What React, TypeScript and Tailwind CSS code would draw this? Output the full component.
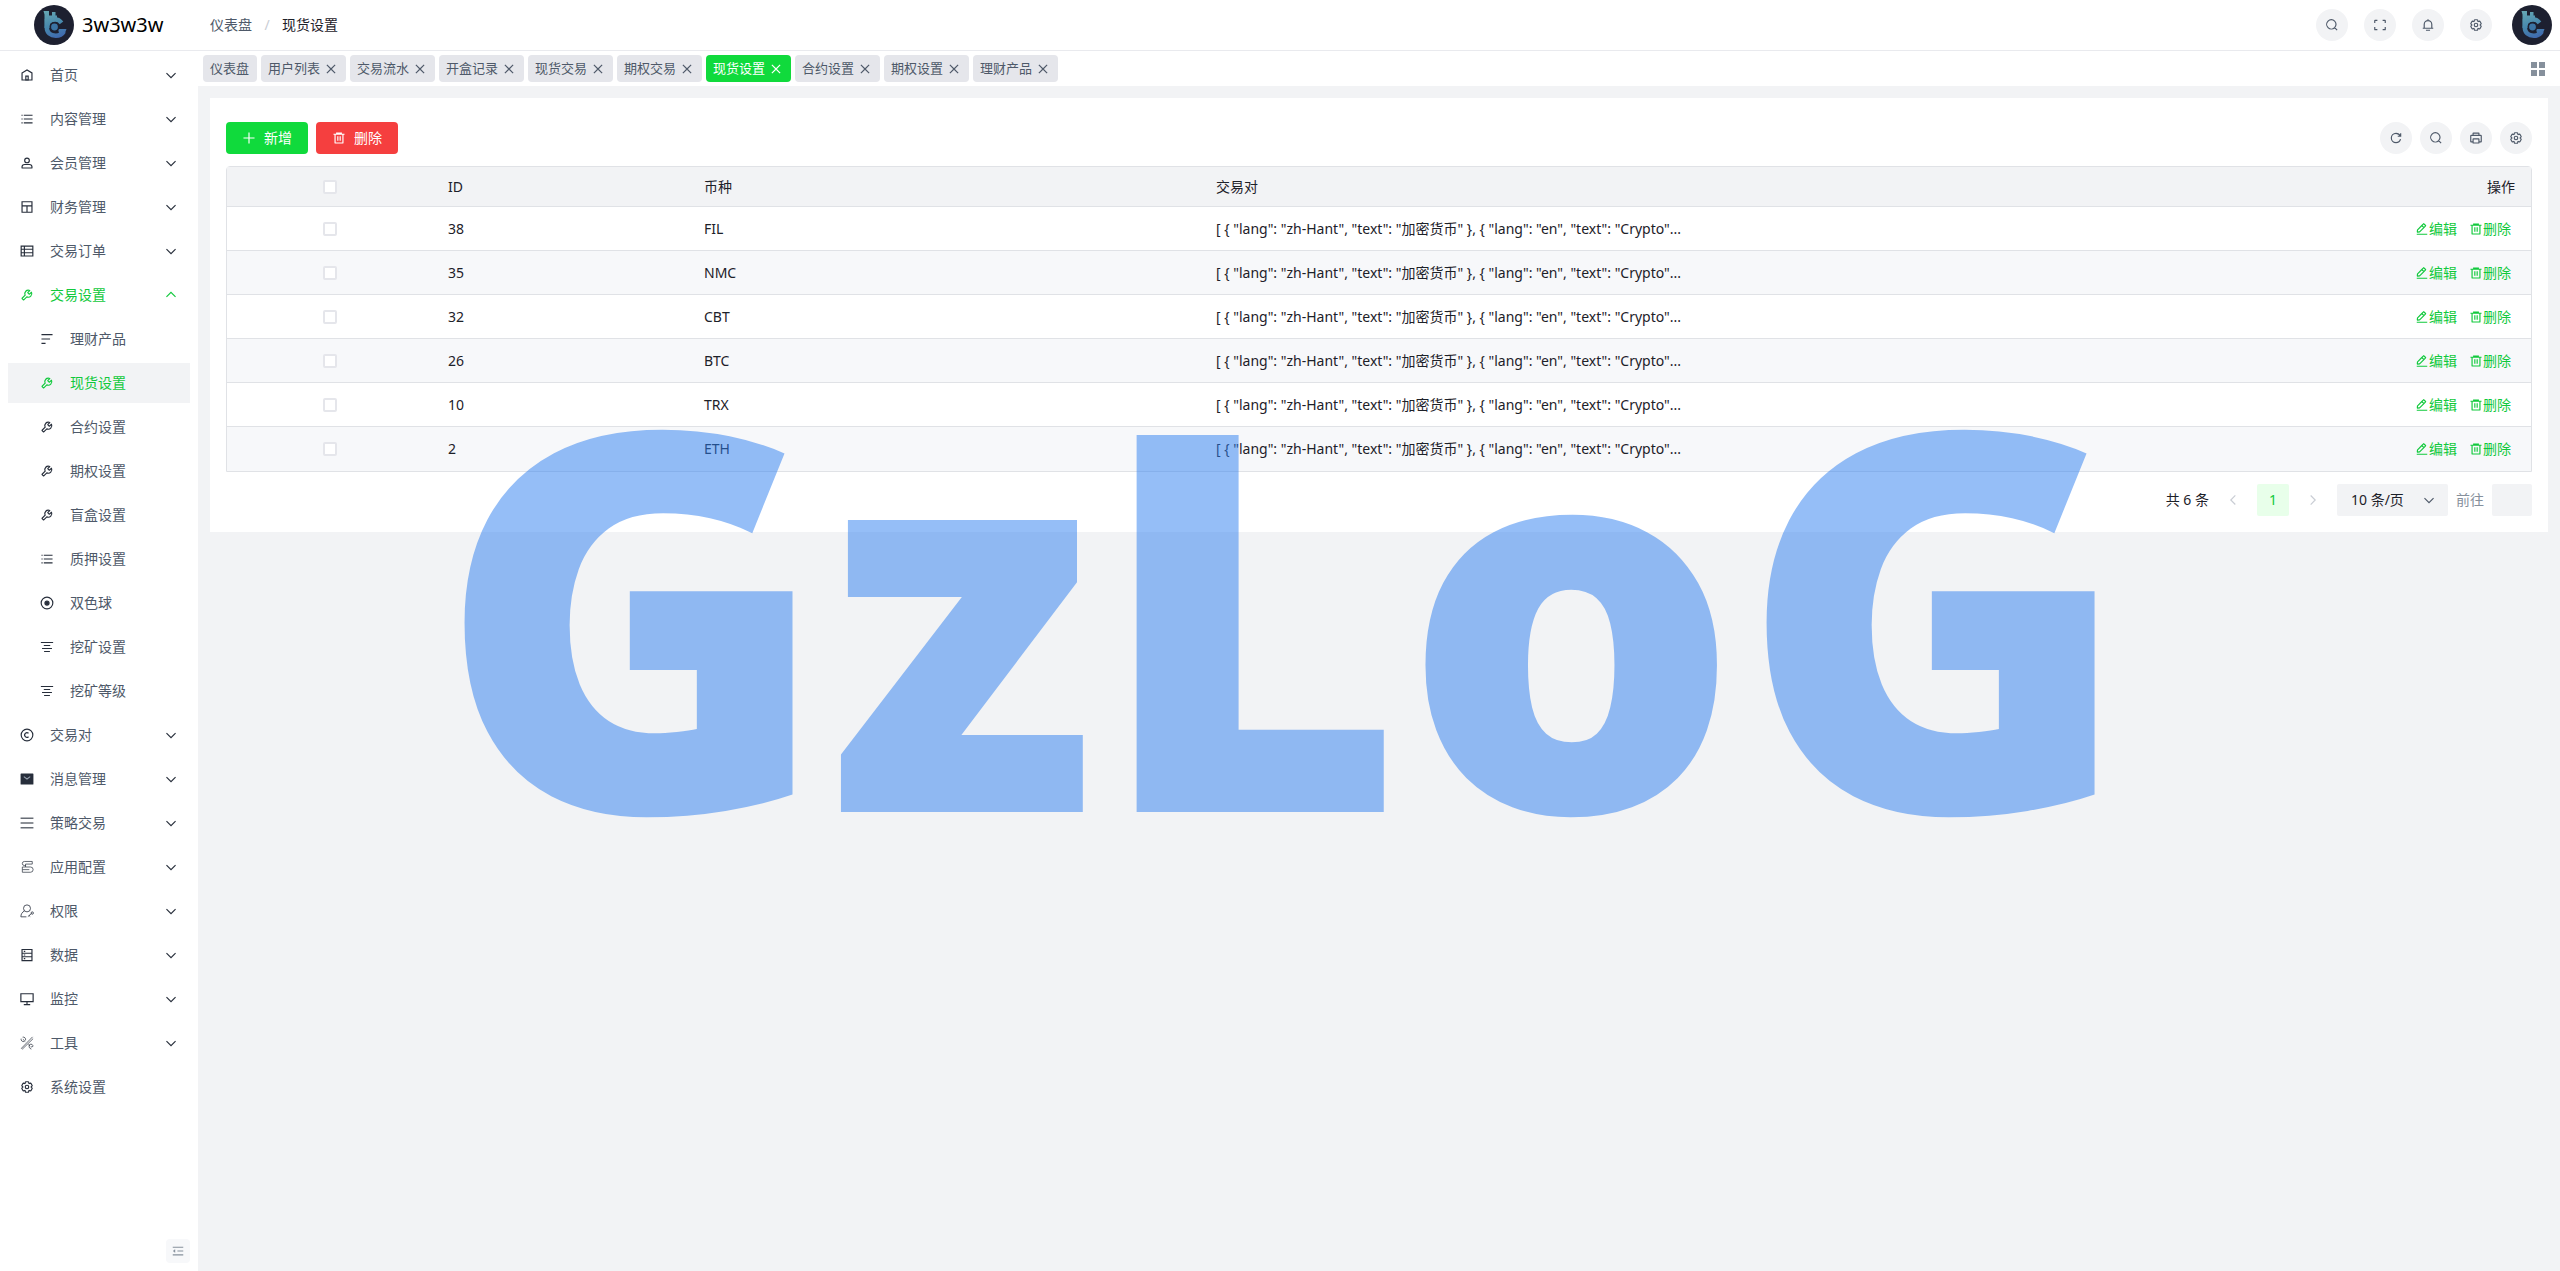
import React, { useState } from "react";
import clsx from "clsx";

type IconProps = { className?: string };

const FONT = "font-['Noto_Sans','Noto_Sans_CJK_SC',sans-serif]";

/* Stroke icon on a 48 grid */
function Stroke({
  className = "h-3.5 w-3.5",
  children,
}: IconProps & { children: React.ReactNode }) {
  return (
    <svg
      viewBox="0 0 48 48"
      fill="none"
      stroke="currentColor"
      strokeWidth={4}
      className={clsx("shrink-0", className)}
      aria-hidden="true"
    >
      {children}
    </svg>
  );
}

const IconHome = () => (
  <Stroke>
    <path d="M7 17 24 7l17 10v24H7V17Z" />
    <path d="M20 28h8v13h-8V28Z" />
  </Stroke>
);

const IconList = () => (
  <Stroke>
    <path d="M13 24h30M5 11h4m4 26h30M13 11h30M5 24h4M5 37h4" />
  </Stroke>
);

const IconUser = () => (
  <Stroke>
    <path d="M7 37c0-4.97 4.03-8 9-8h16c4.97 0 9 3.03 9 8v3a1 1 0 0 1-1 1H8a1 1 0 0 1-1-1v-3Z" />
    <circle cx="24" cy="15" r="8" />
  </Stroke>
);

const IconLayout = () => (
  <Stroke>
    <path d="M7 6h34v36H7zM7 20h34M24 20v22" />
  </Stroke>
);

const IconTable = () => (
  <Stroke>
    <path d="M4 7h40v34H4zM4 18h40M4 30h40M15 7v34" />
  </Stroke>
);

const IconStorage = () => (
  <Stroke>
    <path d="M7 5h34v38H7zM7 18h34M7 30h34" />
    <path d="M13 11.500h5M13 24h5M13 36.500h5" />
  </Stroke>
);

const IconTool = () => (
  <Stroke>
    <path d="M19.994 11.035c3.66-3.659 9.094-4.46 13.531-2.405a.1.1 0 0 1 .028.16l-6.488 6.488a1 1 0 0 0 0 1.414l4.243 4.243a1 1 0 0 0 1.414 0l6.488-6.488a.1.1 0 0 1 .16.028c2.056 4.437 1.254 9.872-2.405 13.53-3.695 3.696-9.2 4.477-13.66 2.347L12.923 40.733a1 1 0 0 1-1.414 0L7.266 36.49a1 1 0 0 1 0-1.414l10.382-10.382c-2.13-4.46-1.349-9.965 2.346-13.66Z" />
  </Stroke>
);

const IconSort = () => (
  <Stroke>
    <path d="M43 9H5m0 30h14m15.5-15H5" />
  </Stroke>
);

const IconRecord = () => (
  <Stroke>
    <circle cx="24" cy="24" r="20" />
    <circle cx="24" cy="24" r="7" fill="currentColor" />
  </Stroke>
);

const IconAlignCenter = () => (
  <Stroke>
    <path d="M3 8.600h42M13 18.900h22M7 29.100h34M14 39.400h20" strokeWidth={3.5} />
  </Stroke>
);

const IconCopyright = () => (
  <Stroke>
    <path d="M29.292 18a8 8 0 1 0 0 12M44 24c0 11.046-8.954 20-20 20S4 35.046 4 24 12.954 4 24 4s20 8.954 20 20Z" />
  </Stroke>
);

const IconMailFill = () => (
  <Stroke>
    <rect x="2" y="5" width="44" height="38" rx="2" fill="currentColor" stroke="none" />
    <path d="m13 16 11 8 11-8" stroke="#9aa3b1" strokeWidth={3.5} />
  </Stroke>
);

const IconMenu = () => (
  <Stroke>
    <path d="M2 8h44M2 24h44M2 40h44" strokeOpacity={0.7} strokeWidth={5} />
  </Stroke>
);

const IconConfig = () => (
  <Stroke>
    <g strokeWidth={3} strokeOpacity={0.8}>
      <path d="M42 5H15a7 7 0 0 0 0 14h5M42 5v9H19v10h17a8 8 0 0 1 0 18H8" />
      <path d="M19 24H8v9h24M8 33v9" />
    </g>
  </Stroke>
);

const IconPermission = () => (
  <Stroke>
    <g strokeWidth={3} strokeOpacity={0.9}>
      <circle cx="24" cy="15" r="12" />
      <path d="M15 24C7 28 3 35 3 44h19M27 43l12-10M31 39l4 4" />
      <circle cx="42" cy="31" r="4" />
    </g>
  </Stroke>
);

const IconDesktop = () => (
  <Stroke>
    <path d="M24 33v10m-11 0h22M3 6h42v27H3z" />
  </Stroke>
);

const IconKit = () => (
  <Stroke>
    <g strokeWidth={3} strokeOpacity={0.8}>
      <path d="M43 3 5 42l3 3L45 9M18 19 10 11M29 29l6 6" />
      <path d="M4 9c-2 6 4 12 11 10M9 4c6-2 12 4 10 11M44 36c2-6-5-10-11-7-4 5-2 14 6 16M44 36l-7 2" />
    </g>
  </Stroke>
);

const IconSettings = ({ className }: IconProps) => (
  <Stroke className={className}>
    <path d="M18.797 6.732A1 1 0 0 1 19.76 6h8.48a1 1 0 0 1 .964.732l1.285 4.628a1 1 0 0 0 1.213.7l4.651-1.2a1 1 0 0 1 1.116.468l4.24 7.344a1 1 0 0 1-.153 1.2L38.193 23.3a1 1 0 0 0 0 1.402l3.364 3.427a1 1 0 0 1 .153 1.2l-4.24 7.344a1 1 0 0 1-1.116.468l-4.65-1.2a1 1 0 0 0-1.214.7l-1.285 4.628a1 1 0 0 1-.964.732h-8.48a1 1 0 0 1-.963-.732L17.51 36.64a1 1 0 0 0-1.213-.7l-4.65 1.2a1 1 0 0 1-1.116-.468l-4.24-7.344a1 1 0 0 1 .153-1.2L9.809 24.7a1 1 0 0 0 0-1.402l-3.364-3.427a1 1 0 0 1-.153-1.2l4.24-7.344a1 1 0 0 1 1.116-.468l4.65 1.2a1 1 0 0 0 1.213-.7l1.286-4.628Z" />
    <path d="M30 24a6 6 0 1 1-12 0 6 6 0 0 1 12 0Z" />
  </Stroke>
);

const IconDown = ({ className }: IconProps) => (
  <Stroke className={className}>
    <path d="M39.6 17.443 24.043 33 8.487 17.443" />
  </Stroke>
);

const IconLeft = ({ className }: IconProps) => (
  <Stroke className={className}>
    <path d="M32 8.4 16.444 23.956 32 39.513" />
  </Stroke>
);

const IconClose = ({ className }: IconProps) => (
  <Stroke className={className}>
    <path d="M9.857 9.858 24 24m0 0 14.142 14.142M24 24 38.142 9.858M24 24 9.857 38.142" />
  </Stroke>
);

const IconSearch = () => (
  <Stroke>
    <path d="M33.072 33.071c6.248-6.248 6.248-16.379 0-22.627-6.249-6.249-16.38-6.249-22.628 0-6.248 6.248-6.248 16.379 0 22.627 6.248 6.248 16.38 6.248 22.628 0Zm0 0 8.485 8.485" />
  </Stroke>
);

const IconFullscreen = () => (
  <Stroke>
    <path d="M42 17V9a1 1 0 0 0-1-1h-8M6 17V9a1 1 0 0 1 1-1h8m27 23v8a1 1 0 0 1-1 1h-8M6 31v8a1 1 0 0 0 1 1h8" />
  </Stroke>
);

const IconBell = () => (
  <Stroke>
    <path d="M24 9c7.18 0 13 5.82 13 13v13H11V22c0-7.18 5.82-13 13-13Zm0 0V4M6 35h36m-25 7h14" />
  </Stroke>
);

const IconRefresh = () => (
  <Stroke>
    <path d="M38.837 18C36.463 12.136 30.715 8 24 8 15.163 8 8 15.163 8 24s7.163 16 16 16c7.455 0 13.72-5.1 15.496-12M40 8v10H30" />
  </Stroke>
);

const IconPrinter = () => (
  <Stroke>
    <path d="M14 15V8a1 1 0 0 1 1-1h18a1 1 0 0 1 1 1v7M14 37H7a1 1 0 0 1-1-1V17a2 2 0 0 1 2-2h32a2 2 0 0 1 2 2v19a1 1 0 0 1-1 1h-7m-20-9v12a1 1 0 0 0 1 1h18a1 1 0 0 0 1-1V28a1 1 0 0 0-1-1H15a1 1 0 0 0-1 1Z" />
  </Stroke>
);

const IconPlus = () => (
  <Stroke>
    <path d="M5 24h38M24 5v38" />
  </Stroke>
);

const IconDelete = () => (
  <Stroke>
    <path d="M5 11h5.5m0 0v29a1 1 0 0 0 1 1h25a1 1 0 0 0 1-1V11m-27 0H16m21.5 0H43m-5.5 0H32m-16 0V7h16v4m-16 0h16M20 18v15m8-15v15" />
  </Stroke>
);

const IconEdit = () => (
  <Stroke>
    <path d="m30.48 19.038 5.733-5.734a1 1 0 0 0 0-1.414l-5.586-5.586a1 1 0 0 0-1.414 0l-5.734 5.734m7 7L15.763 33.754a1 1 0 0 1-.59.286l-6.048.708a1 1 0 0 1-1.113-1.069l.477-6.31a1 1 0 0 1 .29-.631l14.7-14.7m7 7-7-7M6 42h36" />
  </Stroke>
);

const IconFold = () => (
  <Stroke>
    <path d="M42 11H6M42 24H22M42 37H6" />
    <path d="m14 19-7 5 7 5v-10Z" fill="currentColor" strokeWidth={1} />
  </Stroke>
);

const IconApps = () => (
  <svg viewBox="0 0 14 14" fill="currentColor" className="h-3.5 w-3.5" aria-hidden="true">
    <path d="M0 0h6v6H0zM8 0h6v6H8zM0 8h6v6H0zM8 8h6v6H8z" />
  </svg>
);

function Logo({ id }: { id: string }) {
  return (
    <svg viewBox="0 0 40 40" className="h-10 w-10 shrink-0" role="img" aria-label="3w3w3w">
      <defs>
        <linearGradient id={id} gradientUnits="userSpaceOnUse" x1="12" y1="5" x2="22" y2="34">
          <stop offset="0" stopColor="#67a9b4" />
          <stop offset="0.55" stopColor="#4788ad" />
          <stop offset="1" stopColor="#3f68ae" />
        </linearGradient>
      </defs>
      <circle cx="20" cy="20" r="20" fill="#1d2030" />
      <path
        d="M9.500 6h5.500v4.500h3V7h3.500v3.500h1.500v4.500h-7v8H10.500V9.500z"
        fill={`url(#${id})`}
      />
      <path
        d="M13 22V14M27.500 17.800A8.200 8.200 0 0 0 12.800 22c0 6 4 8.700 9 8.700 3.600 0 6.300-1.400 8-4.200"
        fill="none"
        stroke={`url(#${id})`}
        strokeWidth={4.5}
      />
      <path d="M24 24h8.500l-1.500 4h-6z" fill={`url(#${id})`} />
      <circle cx="20.500" cy="22" r="4.200" fill="#3b74a4" stroke="#1d2030" strokeWidth={1.6} />
    </svg>
  );
}

type MenuEntry = {
  title: string;
  icon: () => React.ReactElement;
  leaf?: boolean;
  children?: { title: string; icon: () => React.ReactElement }[];
};

const MENU: MenuEntry[] = [
  { title: "首页", icon: IconHome },
  { title: "内容管理", icon: IconList },
  { title: "会员管理", icon: IconUser },
  { title: "财务管理", icon: IconLayout },
  { title: "交易订单", icon: IconTable },
  {
    title: "交易设置",
    icon: IconTool,
    children: [
      { title: "理财产品", icon: IconSort },
      { title: "现货设置", icon: IconTool },
      { title: "合约设置", icon: IconTool },
      { title: "期权设置", icon: IconTool },
      { title: "盲盒设置", icon: IconTool },
      { title: "质押设置", icon: IconList },
      { title: "双色球", icon: IconRecord },
      { title: "挖矿设置", icon: IconAlignCenter },
      { title: "挖矿等级", icon: IconAlignCenter },
    ],
  },
  { title: "交易对", icon: IconCopyright },
  { title: "消息管理", icon: IconMailFill },
  { title: "策略交易", icon: IconMenu },
  { title: "应用配置", icon: IconConfig },
  { title: "权限", icon: IconPermission },
  { title: "数据", icon: IconStorage },
  { title: "监控", icon: IconDesktop },
  { title: "工具", icon: IconKit },
  { title: "系统设置", icon: () => <IconSettings />, leaf: true },
];

const TABS = [
  "仪表盘",
  "用户列表",
  "交易流水",
  "开盒记录",
  "现货交易",
  "期权交易",
  "现货设置",
  "合约设置",
  "期权设置",
  "理财产品",
];

const PAIR_TEXT =
  '[ { "lang": "zh-Hant", "text": "加密货币" }, { "lang": "en", "text": "Crypto"...';

const ROWS = [
  { id: 38, coin: "FIL" },
  { id: 35, coin: "NMC" },
  { id: 32, coin: "CBT" },
  { id: 26, coin: "BTC" },
  { id: 10, coin: "TRX" },
  { id: 2, coin: "ETH" },
];

const CURRENT = "现货设置";

function RoundButton({ label, children }: { label: string; children: React.ReactNode }) {
  return (
    <button
      aria-label={label}
      className="flex h-8 w-8 items-center justify-center rounded-full bg-[#f2f3f5] text-[#4e5969]"
    >
      {children}
    </button>
  );
}

function Header() {
  return (
    <header className="flex h-[51px] items-center justify-between border-b border-[#e9eaee] bg-white pr-2">
      <div className="flex items-center">
        <div className="flex w-[210px] items-center gap-2 pl-[34px]">
          <Logo id="logo-brand" />
          <span className="text-xl text-black">3w3w3w</span>
        </div>
        <nav className="flex items-center text-sm" aria-label="breadcrumb">
          <a href="#" className="text-[#4e5969]">
            仪表盘
          </a>
          <span className="w-[30px] text-center text-[#c9cdd4]">/</span>
          <span className="text-[#1d2129]">{CURRENT}</span>
        </nav>
      </div>
      <div className="flex items-center gap-4">
        <RoundButton label="搜索">
          <IconSearch />
        </RoundButton>
        <RoundButton label="全屏">
          <IconFullscreen />
        </RoundButton>
        <RoundButton label="消息">
          <IconBell />
        </RoundButton>
        <RoundButton label="设置">
          <IconSettings />
        </RoundButton>
        <button aria-label="账号" className="ml-1">
          <Logo id="logo-avatar" />
        </button>
      </div>
    </header>
  );
}

function SideBar() {
  const [open, setOpen] = useState("交易设置");

  return (
    <aside className="flex w-[198px] shrink-0 flex-col justify-between bg-white px-2 py-1">
      <ul className="flex flex-col gap-1 text-sm text-[#4e5969]">
        {MENU.map(({ title, icon: Icon, leaf, children }) => {
          const active = !!children;
          const expanded = active && open === title;
          return (
            <li key={title}>
              <button
                onClick={() => setOpen(expanded ? "" : title)}
                className={clsx(
                  "flex h-10 w-full items-center pr-3 pl-3",
                  active && "text-[#11c93c]"
                )}
              >
                <span className={active ? "" : "text-[#272e3b]"}>
                  <Icon />
                </span>
                <span className="ml-4 flex-1 text-left">{title}</span>
                {!leaf && (
                  <IconDown
                    className={clsx(
                      "h-3.5 w-3.5",
                      active ? "text-[#11c93c]" : "text-[#272e3b]",
                      expanded && "rotate-180"
                    )}
                  />
                )}
              </button>
              {expanded && (
                <ul className="mt-1 flex flex-col gap-1">
                  {children.map(({ title: name, icon: SubIcon }) => (
                    <li key={name}>
                      <a
                        href="#"
                        className={clsx(
                          "flex h-10 items-center gap-4 pl-8",
                          name === CURRENT && "bg-[#f2f3f5] text-[#11c93c]"
                        )}
                      >
                        <span className={name === CURRENT ? "" : "text-[#272e3b]"}>
                          <SubIcon />
                        </span>
                        {name}
                      </a>
                    </li>
                  ))}
                </ul>
              )}
            </li>
          );
        })}
      </ul>
      <button
        aria-label="收起菜单"
        className="mb-1 flex h-6 w-6 items-center justify-center self-end rounded-sm bg-[#f7f8fa] text-[#86909c]"
      >
        <IconFold />
      </button>
    </aside>
  );
}

function TabBar() {
  return (
    <div className="flex h-[35px] items-center justify-between bg-white pr-[15px] pl-[5px]">
      <div className="flex gap-1">
        {TABS.map((tab, i) => (
          <div
            key={tab}
            className={clsx(
              "flex h-[27px] items-center gap-1 rounded pl-[7px] text-[13px]",
              tab === CURRENT ? "bg-[#10da3c] text-white" : "bg-[#e5e6eb] text-[#4e5969]",
              i > 0 ? "w-[85px]" : "w-[54px]"
            )}
          >
            <a href="#" className="whitespace-nowrap">
              {tab}
            </a>
            {i > 0 && (
              <button aria-label={`关闭${tab}`}>
                <IconClose />
              </button>
            )}
          </div>
        ))}
      </div>
      <button aria-label="标签操作" className="text-[#86909c]">
        <IconApps />
      </button>
    </div>
  );
}

function CheckBox({ label }: { label: string }) {
  return (
    <input
      type="checkbox"
      aria-label={label}
      className="mx-auto block h-3.5 w-3.5 appearance-none rounded-xs border-2 border-[#e5e6eb] bg-white checked:bg-[#10da3c]"
    />
  );
}

function DataTable() {
  return (
    <table className="w-full table-fixed border-separate border-spacing-0 rounded-t border border-[#e0e2e6] text-sm text-[#1d2129]">
      <colgroup>
        <col className="w-[205px]" />
        <col className="w-64" />
        <col className="w-[512px]" />
        <col />
        <col className="w-64" />
      </colgroup>
      <thead>
        <tr className="h-10 bg-[#f2f3f5] text-left">
          <th className="border-b border-[#e0e2e6]">
            <CheckBox label="全选" />
          </th>
          <th className="border-b border-[#e0e2e6] px-4 font-normal">ID</th>
          <th className="border-b border-[#e0e2e6] px-4 font-normal">币种</th>
          <th className="border-b border-[#e0e2e6] px-4 font-normal">交易对</th>
          <th className="border-b border-[#e0e2e6] px-4 text-right font-normal">操作</th>
        </tr>
      </thead>
      <tbody>
        {ROWS.map(({ id, coin }) => (
          <tr key={id} className="group h-11 even:bg-[#f7f8fa]">
            <td className="border-b border-[#e0e2e6] group-last:border-b-0">
              <CheckBox label={`选择 ${id}`} />
            </td>
            <td className="border-b border-[#e0e2e6] px-4 group-last:border-b-0">{id}</td>
            <td className="border-b border-[#e0e2e6] px-4 group-last:border-b-0">{coin}</td>
            <td className="border-b border-[#e0e2e6] px-4 group-last:border-b-0">
              {PAIR_TEXT}
            </td>
            <td className="border-b border-[#e0e2e6] px-5 group-last:border-b-0">
              <div className="flex justify-end gap-3 text-[#11c93c]">
                <a href="#" className="flex items-center">
                  <IconEdit />
                  编辑
                </a>
                <a href="#" className="flex items-center">
                  <IconDelete />
                  删除
                </a>
              </div>
            </td>
          </tr>
        ))}
      </tbody>
    </table>
  );
}

function Pagination() {
  return (
    <div className="mt-3 flex items-center justify-end text-sm text-[#1d2129]">
      <span className="mr-2">共 6 条</span>
      <button aria-label="上一页" className="flex h-8 w-8 items-center justify-center text-[#c9cdd4]">
        <IconLeft />
      </button>
      <button className="mx-2 h-8 w-8 rounded-xs bg-[#e8ffea] text-[#11c93c]">1</button>
      <button aria-label="下一页" className="flex h-8 w-8 items-center justify-center text-[#c9cdd4]">
        <IconLeft className="h-3.5 w-3.5 rotate-180" />
      </button>
      <div className="relative ml-2">
        <select
          aria-label="每页条数"
          className="h-8 w-[111px] appearance-none rounded-xs bg-[#f2f3f5] pl-3.5 text-sm"
        >
          <option>10 条/页</option>
          <option>20 条/页</option>
        </select>
        <IconDown className="pointer-events-none absolute inset-y-0 right-3 my-auto h-3.5 w-3.5 text-[#4e5969]" />
      </div>
      <label htmlFor="jump" className="mx-2 text-[#86909c]">
        前往
      </label>
      <input id="jump" type="text" className="h-8 w-10 rounded-xs bg-[#f2f3f5] text-center" />
    </div>
  );
}

function App() {
  return (
    <div className={clsx("relative flex min-h-screen flex-col overflow-hidden bg-[#f2f3f5]", FONT)}>
      <Header />
      <div className="flex flex-1">
        <SideBar />
        <main className="min-w-0 flex-1">
          <TabBar />
          <section className="mx-3 mt-3 bg-white p-4">
            <div className="mt-2 mb-3 flex items-center justify-between">
              <div className="flex gap-2 text-sm text-white">
                <button className="flex h-8 items-center gap-2 rounded bg-[#10da3c] px-4">
                  <IconPlus />
                  新增
                </button>
                <button className="flex h-8 items-center gap-2 rounded bg-[#f53f3f] px-4">
                  <IconDelete />
                  删除
                </button>
              </div>
              <div className="flex gap-2">
                <RoundButton label="刷新">
                  <IconRefresh />
                </RoundButton>
                <RoundButton label="搜索">
                  <IconSearch />
                </RoundButton>
                <RoundButton label="打印">
                  <IconPrinter />
                </RoundButton>
                <RoundButton label="设置">
                  <IconSettings />
                </RoundButton>
              </div>
            </div>
            <DataTable />
            <Pagination />
          </section>
        </main>
      </div>
      {/* Watermark over the page */}
      <div className="pointer-events-none absolute inset-0 flex items-center justify-center pb-14 pl-2 font-['Noto_Sans'] text-[528px] leading-none font-black text-[#2b7def]/50">
        GzLoG
      </div>
    </div>
  );
}

export default App;
